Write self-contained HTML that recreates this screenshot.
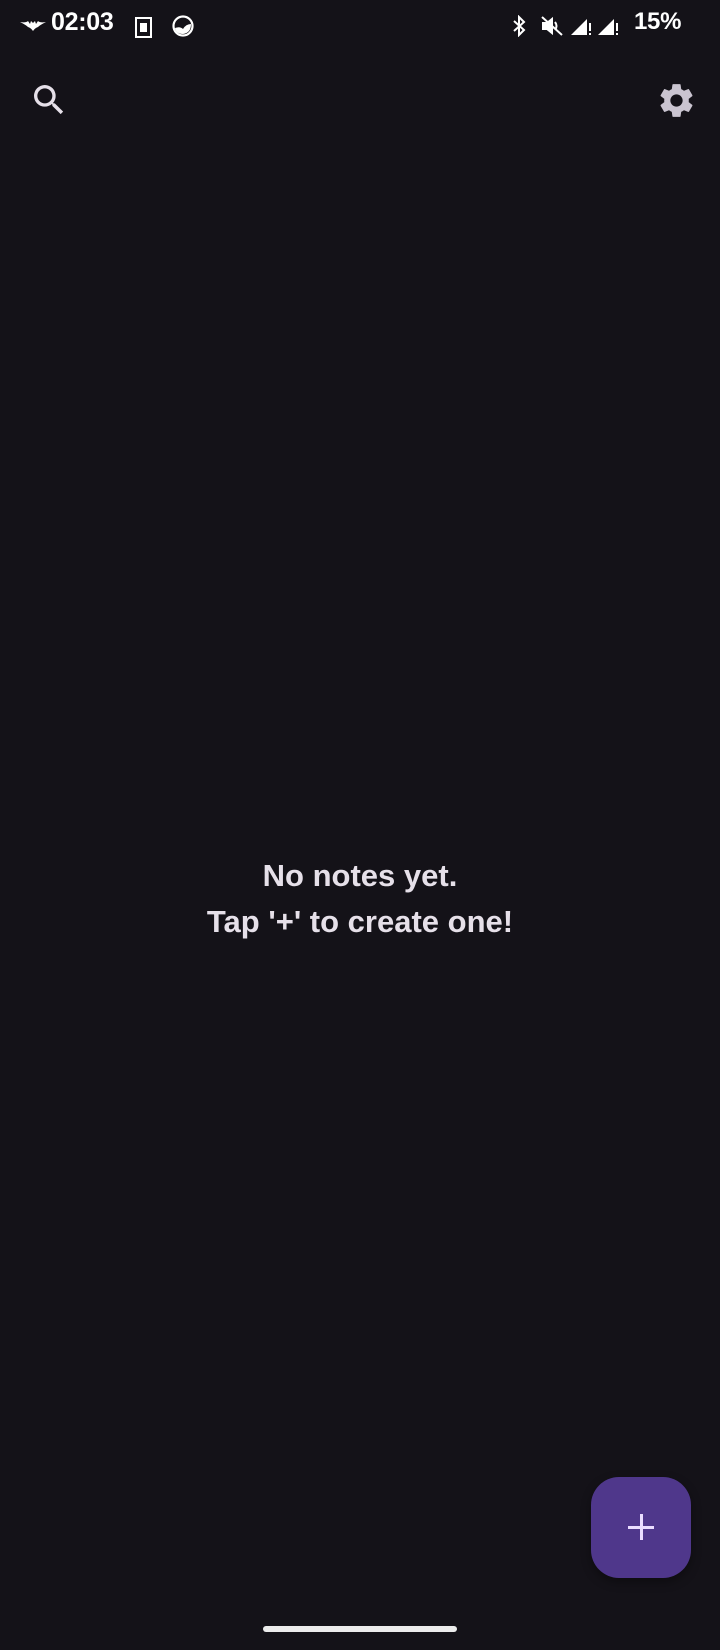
<!DOCTYPE html>
<html><head><meta charset="utf-8"><style>
html,body{margin:0;padding:0;background:#141218;width:720px;height:1650px;overflow:hidden;font-family:"Liberation Sans",Roboto,sans-serif;}
.abs{position:absolute;}
</style></head><body>
<div class="abs" style="left:20px;top:19px;width:26px;height:12px;">
<svg width="26" height="12" viewBox="0 0 26 12"><path d="M0 2 Q6 3 8 1 L10 4 L11 1 L13 3 L15 1 L16 4 L18 1 Q20 3 26 2 Q20 5 18 7 Q15 8 13 11 Q11 8 8 7 Q6 5 0 2Z" fill="#fff"/></svg></div>
<div class="abs" style="left:51px;top:8px;color:#fff;font-weight:bold;font-size:25px;letter-spacing:-0.3px;">02:03</div>
<div class="abs" style="left:135px;top:17px;width:13px;height:17px;border:2px solid #fff;"><div style="position:absolute;left:3px;top:4px;width:7px;height:9px;background:#fff;"></div></div>
<div class="abs" style="left:172px;top:15px;">
<svg width="22" height="22" viewBox="0 0 22 22"><circle cx="11" cy="11" r="9.5" fill="none" stroke="#fff" stroke-width="2.2"/><path d="M3 13 Q8 11 11 14 Q14 9 19 9 Q19 18 11 19 Q4 19 3 13Z" fill="#fff"/></svg></div>
<div class="abs" style="left:510px;top:15px;">
<svg width="18" height="22" viewBox="0 0 18 22" fill="none" stroke="#fff" stroke-width="2"><path d="M4 6 L14 15 L9 20 V2 L14 7 L4 16"/></svg></div>
<div class="abs" style="left:540px;top:15px;">
<svg width="24" height="22" viewBox="0 0 24 22" fill="none" stroke="#fff" stroke-width="2"><path d="M3 8 H7 L12 4 V18 L7 14 H3Z" fill="#fff"/><path d="M15 7 Q18 11 15 15 M2 2 L22 20"/></svg></div>
<div class="abs" style="left:571px;top:15px;">
<svg width="50" height="22" viewBox="0 0 50 22"><path d="M0 20 L16 4 V20Z" fill="#fff"/><rect x="18" y="8" width="2" height="8" fill="#fff"/><rect x="18" y="18" width="2" height="2" fill="#fff"/><path d="M27 20 L43 4 V20Z" fill="#fff"/><rect x="45" y="8" width="2" height="8" fill="#fff"/><rect x="45" y="18" width="2" height="2" fill="#fff"/></svg></div>
<div class="abs" style="left:634px;top:8px;color:#fff;font-weight:bold;font-size:24px;letter-spacing:-0.3px;">15%</div>

<div class="abs" style="left:29px;top:80px;">
<svg width="40" height="40" viewBox="0 0 24 24"><path fill="#e6e0e9" d="M15.5 14h-.79l-.28-.27A6.471 6.471 0 0 0 16 9.5 6.5 6.5 0 1 0 9.5 16c1.61 0 3.09-.59 4.23-1.57l.27.28v.79l5 4.99L20.49 19l-4.99-5zm-6 0C7.01 14 5 11.99 5 9.5S7.01 5 9.5 5 14 7.01 14 9.5 11.99 14 9.5 14z"/></svg></div>
<div class="abs" style="left:656px;top:80px;">
<svg width="41" height="41" viewBox="0 0 24 24"><path fill="#cac4d0" d="M19.14 12.94c.04-.3.06-.61.06-.94 0-.32-.02-.64-.07-.94l2.030-1.58a.49.49 0 0 0 .12-.61l-1.920-3.32a.488.488 0 0 0-.59-.22l-2.390.96c-.5-.38-1.030-.7-1.620-.94l-.36-2.54a.484.484 0 0 0-.48-.41h-3.840c-.24 0-.43.17-.47.41l-.36 2.540c-.59.24-1.130.57-1.620.94l-2.390-.96c-.22-.08-.47 0-.59.22L2.74 8.87c-.12.21-.08.47.12.61l2.030 1.580c-.05.3-.09.63-.09.94s.02.64.07.94l-2.030 1.580a.49.49 0 0 0-.12.61l1.920 3.320c.12.22.37.29.59.22l2.390-.96c.5.38 1.030.7 1.620.94l.36 2.540c.05.24.24.41.48.41h3.840c.24 0 .44-.17.47-.41l.36-2.540c.59-.24 1.130-.56 1.620-.94l2.390.96c.22.08.47 0 .59-.22l1.920-3.320c.12-.22.07-.47-.12-.61l-2.010-1.580zM12 15.6c-1.98 0-3.6-1.62-3.6-3.6s1.62-3.6 3.6-3.6 3.6 1.62 3.6 3.6-1.620 3.6-3.6 3.6z"/></svg></div>

<div class="abs" style="left:0;width:720px;top:853px;text-align:center;color:#e6e0e9;font-weight:bold;font-size:31px;line-height:46px;">No notes yet.<br>Tap '+' to create one!</div>

<div class="abs" style="left:591px;top:1477px;width:100px;height:101px;border-radius:28px;background:#4f378b;box-shadow:0 4px 10px rgba(0,0,0,0.35);">
<div style="position:absolute;left:37px;top:49px;width:26px;height:2.5px;background:#eaddff;"></div>
<div style="position:absolute;left:49px;top:37px;width:2.5px;height:26px;background:#eaddff;"></div></div>
<div class="abs" style="left:263px;top:1626px;width:194px;height:6px;border-radius:3px;background:#ececec;"></div>
</body></html>
